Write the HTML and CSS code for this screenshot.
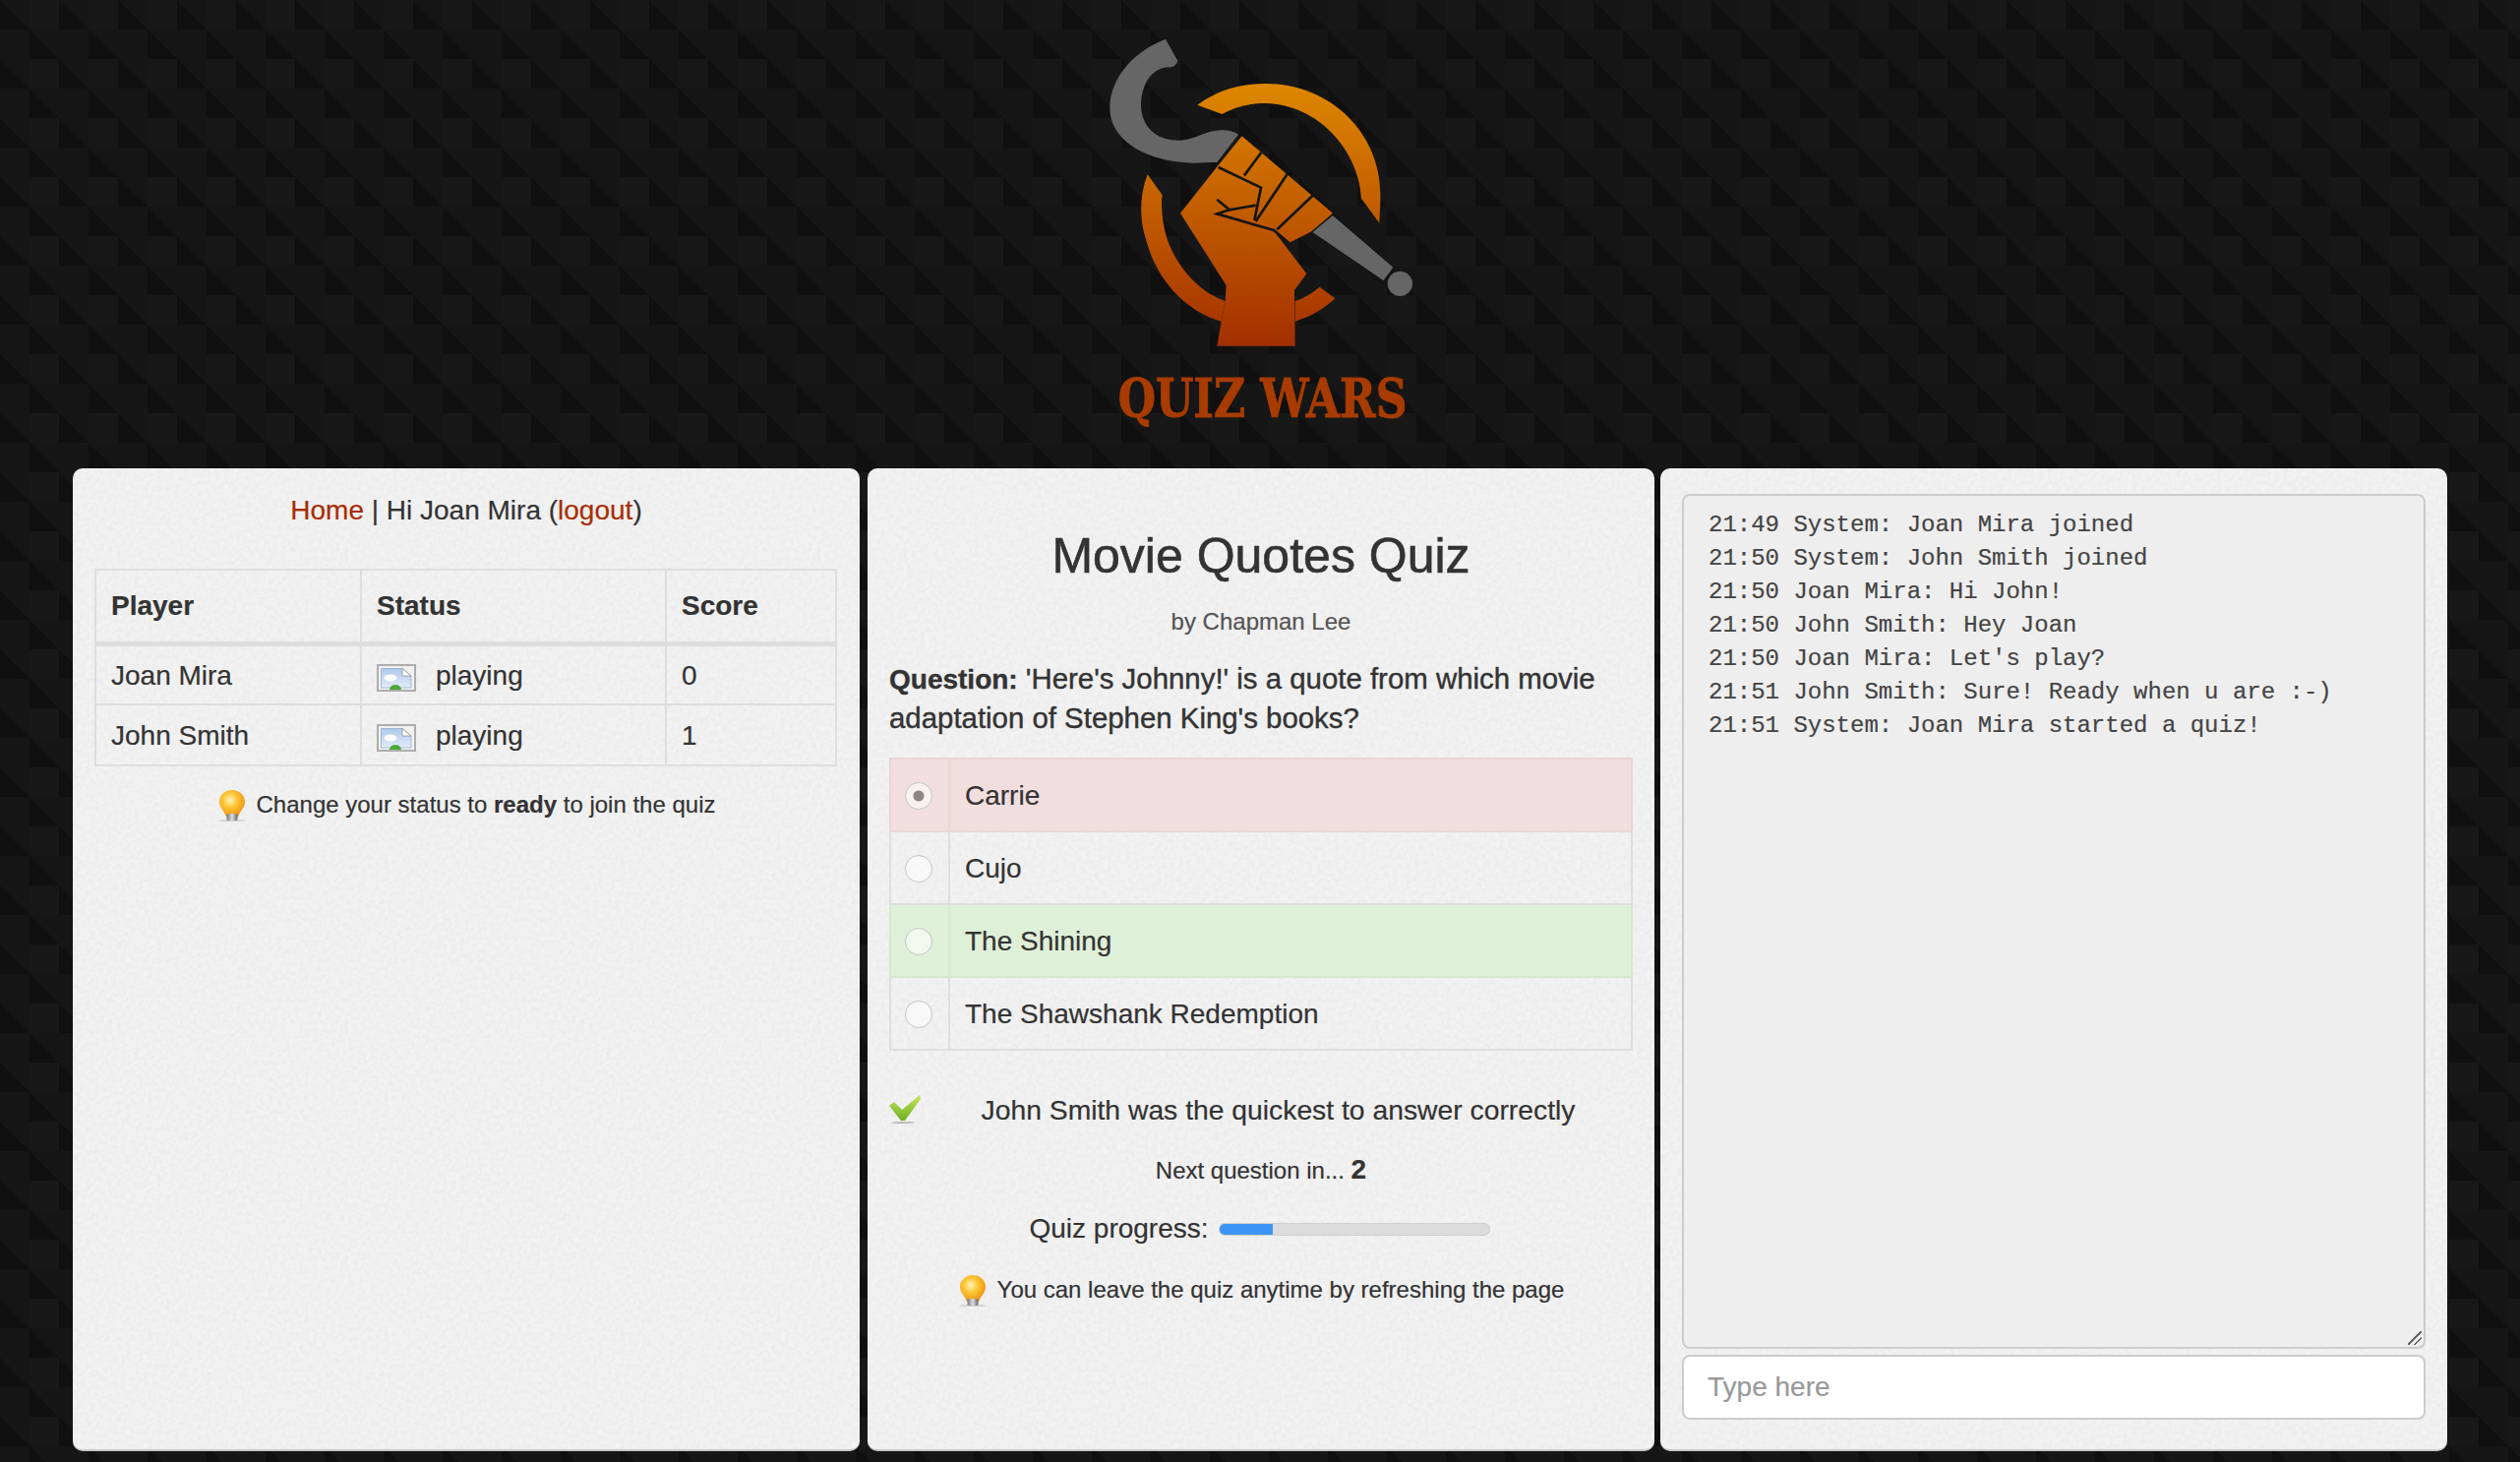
FILE: index.html
```html
<!DOCTYPE html>
<html lang="en">
<head>
<meta charset="utf-8">
<title>Quiz Wars</title>
<link rel="stylesheet" href="styles.css">
</head>
<body>
<svg class="defs" width="0" height="0" aria-hidden="true">
  <defs>
    <radialGradient id="bulbGrad" cx="42%" cy="38%" r="65%">
      <stop offset="0" stop-color="#fff3c0"/>
      <stop offset="0.4" stop-color="#fcc93a"/>
      <stop offset="1" stop-color="#ee8f0c"/>
    </radialGradient>
    <linearGradient id="bulbBase" x1="0" y1="0" x2="1" y2="0">
      <stop offset="0" stop-color="#777"/>
      <stop offset="0.5" stop-color="#ddd"/>
      <stop offset="1" stop-color="#666"/>
    </linearGradient>
    <symbol id="bulb" viewBox="0 0 30 32">
      <ellipse cx="15" cy="31" rx="14" ry="1" fill="#bbb" opacity=".6"/>
      <path d="M15 0C7 0 2 6 2 12c0 6 5 9 7 15h12c2-6 7-9 7-15C28 6 23 0 15 0Z" fill="url(#bulbGrad)"/>
      <rect x="9.500" y="24" width="11" height="7" rx="1.500" fill="url(#bulbBase)"/>
    </symbol>
    <linearGradient id="docGrad" x1="0" y1="0" x2="0" y2="1">
      <stop offset="0" stop-color="#aec8ec"/>
      <stop offset="1" stop-color="#e3ecf8"/>
    </linearGradient>
    <symbol id="broken" viewBox="0 0 40 28">
      <rect x="1" y="1" width="38" height="26" fill="#f1f1f1" stroke="#adadad" stroke-width="2"/>
      <path d="M4.500 4.500H26L35 12V24H4.500Z" fill="url(#docGrad)" stroke="#8ea4c4" stroke-width=".7"/>
      <path d="M26 4.500V12H35Z" fill="#fff" stroke="#888" stroke-width=".7"/>
      <ellipse cx="14" cy="14" rx="6.500" ry="3.500" fill="#fff"/>
      <path d="M13 26a6 5 0 0 1 12 0Z" fill="#4ea83a"/>
    </symbol>
    <linearGradient id="checkGrad" x1="0" y1="0" x2="0" y2="1">
      <stop offset="0" stop-color="#c3e55d"/>
      <stop offset="1" stop-color="#6fae22"/>
    </linearGradient>
  </defs>
</svg>

<header class="masthead">
  <svg class="logo" viewBox="3 0 1200 1260" role="img" aria-label="Quiz Wars logo">
    <defs>
      <linearGradient id="orange" gradientUnits="userSpaceOnUse" x1="0" y1="195" x2="0" y2="995">
        <stop offset="0" stop-color="#de8700"/>
        <stop offset="1" stop-color="#a32f00"/>
      </linearGradient>
    </defs>
    <path fill="#666" d="M315 60L352 125Q345 148 320 145C270 150 240 200 240 265C245 340 300 370 360 368C410 365 440 335 490 337C515 338 530 345 537 350L472 435C440 435 400 440 370 435C240 425 145 360 145 270C145 170 230 90 315 60Z"/>
    <path fill="url(#orange)" d="M412 260C480 210 550 195 620 195C820 195 975 350 970 540C970 570 968 600 967 620L912 545C905 400 780 258 620 255C570 255 530 265 487 288Z"/>
    <path fill="url(#orange)" d="M260 472L305 535C300 560 305 600 310 630C325 720 400 825 497 858L485 920C380 890 290 800 255 670C235 610 235 535 260 472Z"/>
    <path fill="url(#orange)" d="M710 858C735 850 760 835 785 815L832 850C800 880 760 905 710 920Z"/>
    <path fill="url(#orange)" d="M548 355L825 590L762 645L692 680L650 650L745 775L708 825L710 995L472 995L485 920L497 860L500 810L360 590L475 445Z"/>
    <g fill="none" stroke="#141414" stroke-width="8">
      <path d="M476 450L606 512L586 612"/>
      <path d="M472 548L510 580L590 566"/>
      <path d="M510 580L472 592L645 642L692 682"/>
      <path d="M607 405L555 475"/>
      <path d="M690 465L590 615"/>
      <path d="M770 530L655 640"/>
    </g>
    <path fill="#666" stroke="#141414" stroke-width="4" d="M825 595L1012 755L980 798L760 648Z"/>
    <circle cx="1030" cy="805" r="38" fill="#666"/>
    <text class="logo-text" transform="translate(170 1213) scale(.8 1)">QUIZ WARS</text>
  </svg>
</header>

<main class="board">
  <section class="panel players">
    <p class="nav"><a href="#">Home</a> | Hi Joan Mira (<a href="#">logout</a>)</p>
    <table class="scores">
      <thead>
        <tr><th class="col-player">Player</th><th class="col-status">Status</th><th>Score</th></tr>
      </thead>
      <tbody>
        <tr><td>Joan Mira</td><td><svg class="broken"><use href="#broken"/></svg>playing</td><td>0</td></tr>
        <tr><td>John Smith</td><td><svg class="broken"><use href="#broken"/></svg>playing</td><td>1</td></tr>
      </tbody>
    </table>
    <p class="hint players-hint"><svg class="bulb"><use href="#bulb"/></svg>Change your status to <b>ready</b> to join the quiz</p>
  </section>

  <section class="panel quiz">
    <h2 class="title">Movie Quotes Quiz</h2>
    <p class="author">by Chapman Lee</p>
    <p class="question"><b>Question:</b> 'Here's Johnny!' is a quote from which movie<br>adaptation of Stephen King's books?</p>
    <table class="options">
      <tr class="wrong"><td class="pick"><span class="radio checked"></span></td><td>Carrie</td></tr>
      <tr><td class="pick"><span class="radio"></span></td><td>Cujo</td></tr>
      <tr class="right"><td class="pick"><span class="radio"></span></td><td>The Shining</td></tr>
      <tr><td class="pick"><span class="radio"></span></td><td>The Shawshank Redemption</td></tr>
    </table>
    <div class="result">
      <svg class="check" viewBox="0 0 33 29">
        <ellipse cx="14" cy="28" rx="12" ry="1" fill="#bbb"/>
        <path d="M0 11L5 7L13 15L31 0L32 4L16 26H12Z" fill="url(#checkGrad)"/>
      </svg>
      <span class="result-text">John Smith was the quickest to answer correctly</span>
    </div>
    <p class="next">Next question in... <b>2</b></p>
    <div class="progress-row">
      <span>Quiz progress:</span>
      <div class="track"><div class="fill"></div></div>
    </div>
    <p class="hint quiz-hint"><svg class="bulb"><use href="#bulb"/></svg>You can leave the quiz anytime by refreshing the page</p>
  </section>

  <section class="panel chat">
    <div class="log">
      <div>21:49 System: Joan Mira joined</div>
      <div>21:50 System: John Smith joined</div>
      <div>21:50 Joan Mira: Hi John!</div>
      <div>21:50 John Smith: Hey Joan</div>
      <div>21:50 Joan Mira: Let's play?</div>
      <div>21:51 John Smith: Sure! Ready when u are :-)</div>
      <div>21:51 System: Joan Mira started a quiz!</div>
    </div>
    <input class="say" type="text" placeholder="Type here">
  </section>
</main>
</body>
</html>
```
FILE: styles.css
```css
* { box-sizing: border-box; }

html, body { height: 100%; }

body {
  margin: 0;
  overflow: hidden;
  font-family: "Liberation Sans", Arial, sans-serif;
  font-size: 28px;
  line-height: 40px;
  color: #333;
  -webkit-text-stroke: .2px currentColor;
  background-color: #151515;
  background-image: url("data:image/svg+xml,%3Csvg xmlns='http://www.w3.org/2000/svg' width='60' height='60'%3E%3Crect width='60' height='60' fill='%23161616'/%3E%3Crect x='30' width='30' height='30' fill='%23181818'/%3E%3Cpath d='M0 0L30 30H0Z' fill='%23101010'/%3E%3Cpath d='M30 30L60 60H30Z' fill='%23101010'/%3E%3C/svg%3E");
}

.defs { position: absolute; }

p { margin: 0; }

a { color: #a82d00; text-decoration: none; }

/* header */
.masthead {
  height: 476px;
  padding-top: 20px;
  display: flex;
  justify-content: center;
}

.logo { width: 400px; height: 420px; }

.logo-text {
  font-family: "DejaVu Serif", "Liberation Serif", serif;
  font-weight: 700;
  font-size: 165px;
  fill: #a83c00;
  stroke: #a83c00;
  stroke-width: 3px;
}

/* three columns */
.board {
  height: 999px;
  padding-left: 74px;
  display: flex;
}

.panel {
  width: 800px;
  flex: none;
  border-radius: 10px;
  border-bottom: 2px solid #c9c9c9;
  background-color: #f3f3f3;
  background-image: url("data:image/svg+xml,%3Csvg xmlns='http://www.w3.org/2000/svg' width='240' height='240'%3E%3Cfilter id='n' x='0' y='0' width='100%25' height='100%25'%3E%3CfeTurbulence type='fractalNoise' baseFrequency='.22' numOctaves='3' stitchTiles='stitch'/%3E%3CfeColorMatrix values='0 0 0 0 .55 0 0 0 0 .55 0 0 0 0 .55 .3 0 0 0 -.08'/%3E%3C/filter%3E%3Crect width='240' height='240' filter='url(%23n)'/%3E%3C/svg%3E");
}

/* players */
.players { padding: 23px 22px; }

.nav { text-align: center; }

.scores {
  width: 755px;
  margin-top: 39px;
  border-collapse: collapse;
  table-layout: fixed;
}

.scores th, .scores td {
  border: 2px solid #ddd;
  padding: 0 15px;
  text-align: left;
  vertical-align: middle;
}

.scores td { height: 62px; padding-top: 2px; }
.scores th { height: 75px; }
.scores thead th { border-bottom-width: 5px; }

.col-player { width: 270px; }
.col-status { width: 310px; }

.broken {
  width: 40px;
  height: 28px;
  margin-right: 20px;
  vertical-align: -7px;
}

.hint {
  font-size: 24px;
  text-align: center;
}

.players-hint { margin-top: 19px; }

.bulb {
  width: 30px;
  height: 32px;
  margin-right: 10px;
  vertical-align: -9px;
}

/* quiz */
.quiz {
  margin: 0 6px 0 8px;
  padding: 22px;
}

.title {
  margin: 37px 0 0;
  font-size: 50px;
  font-weight: 400;
  line-height: 60px;
  text-align: center;
  -webkit-text-stroke: .6px #333;
}

.author {
  margin-top: 20px;
  font-size: 24px;
  line-height: 34px;
  color: #555;
  text-align: center;
}

.question {
  margin-top: 21px;
  height: 80px;
  font-size: 29.400px;
  -webkit-text-stroke: .4px #333;
}

.question b { font-size: 28px; line-height: 1; }

.options {
  width: 756px;
  margin-top: 20px;
  border-collapse: collapse;
  table-layout: fixed;
}

.options td {
  height: 74px;
  padding: 2px 15px 0;
  border: 2px solid #ddd;
}

.options .pick { width: 60px; padding-left: 14px; }

.options .wrong td { background: #f2dede; border-color: #ecd4d4; }
.options .right td { background: #dff0d8; border-color: #d5e8cd; }

.radio {
  display: block;
  width: 28px;
  height: 28px;
  border: 1px solid #c4c4c4;
  border-radius: 50%;
  background: rgba(255, 255, 255, .55);
}

.radio.checked {
  background: radial-gradient(circle, #8d8585 0 5px, #f7f2f2 6px);
}

.result {
  margin-top: 40px;
  display: flex;
  align-items: center;
  font-size: 28.300px;
}

.check { width: 33px; height: 29px; flex: none; margin-top: -2px; }

.result-text { flex: 1; padding-left: 2px; text-align: center; }

.next {
  margin-top: 21px;
  font-size: 24px;
  text-align: center;
}

.next b { font-size: 28px; }

.progress-row {
  margin-top: 19px;
  padding-right: 3px;
  display: flex;
  justify-content: center;
  align-items: center;
  gap: 10px;
}

.track {
  width: 276px;
  height: 13px;
  border: 1px solid #cfcfcf;
  border-radius: 6px;
  background: #dcdcdc;
  overflow: hidden;
}

.fill {
  width: 54px;
  height: 100%;
  background: #3d96f5;
}

.quiz-hint { margin-top: 22px; }

/* chat */
.chat {
  padding: 26px 22px 30px;
  display: flex;
  flex-direction: column;
  gap: 6px;
}

.log {
  position: relative;
  flex: 1;
  padding: 13px 25px;
  border: 2px solid #ccc;
  border-radius: 8px;
  background: #eee;
  font-family: "Liberation Mono", "Courier New", monospace;
  font-size: 24px;
  line-height: 34px;
  color: #444;
}

.log::after {
  content: "";
  position: absolute;
  right: 2px;
  bottom: 2px;
  width: 14px;
  height: 14px;
  background: linear-gradient(135deg, transparent 0 44%, #666 44% 54%, transparent 54% 68%, #666 68% 78%, transparent 78%);
}

.say {
  height: 66px;
  width: 100%;
  padding: 0 24px;
  border: 2px solid #ccc;
  border-radius: 8px;
  background: #fff;
  font: 28px "Liberation Sans", Arial, sans-serif;
  color: #333;
}

.say::placeholder { color: #999; opacity: 1; }
```
